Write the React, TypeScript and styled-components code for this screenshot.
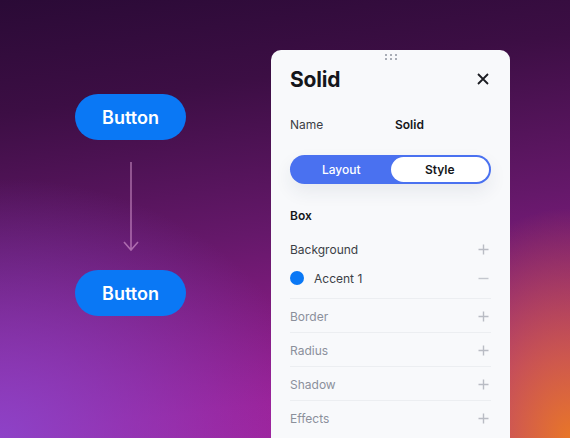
import React from 'react'
import styled, { createGlobalStyle } from 'styled-components'

const GlobalStyle = createGlobalStyle`
  html, body {
    margin: 0;
    padding: 0;
    overflow: hidden;
  }
  body {
    font-family: Inter, "Noto Sans", sans-serif;
  }
`

const sections = ['Border', 'Radius', 'Shadow', 'Effects']

function PlusIcon() {
    return (
        <svg width="11" height="11" viewBox="0 0 11 11">
            <path d="M5.5 0.5v10M0.5 5.5h10" stroke="#b9bcc4" strokeWidth="1.4" />
        </svg>
    )
}

function MinusIcon() {
    return (
        <svg width="11" height="11" viewBox="0 0 11 11">
            <path d="M0.5 5.5h10" stroke="#c4c7ce" strokeWidth="1.4" />
        </svg>
    )
}

export default function App() {
    return (
        <>
            <GlobalStyle />
            <Stage>
                <Demo>
                    <PillButton>Button</PillButton>
                    <Arrow width="20" height="130" viewBox="0 0 20 130">
                        <path d="M10 22v88M3 102l7 8 7-8" stroke="rgba(230,170,220,0.55)" strokeWidth="1.6" fill="none" />
                    </Arrow>
                    <PillButton>Button</PillButton>
                </Demo>
                <Panel>
                    <Handle>
                        {Array.from({ length: 6 }).map((_, i) => <Dot key={i} />)}
                    </Handle>
                    <TitleRow>
                        <Title>Solid</Title>
                        <svg width="12" height="12" viewBox="0 0 12 12">
                            <path d="M1 1l10 10M11 1L1 11" stroke="#1c1d22" strokeWidth="1.8" />
                        </svg>
                    </TitleRow>
                    <NameRow>
                        <Label>Name</Label>
                        <Value>Solid</Value>
                    </NameRow>
                    <Toggle>
                        <Tab>Layout</Tab>
                        <Tab $active>Style</Tab>
                    </Toggle>
                    <Heading>Box</Heading>
                    <Row>
                        <RowLabel>Background</RowLabel>
                        <PlusIcon />
                    </Row>
                    <AccentRow>
                        <Swatch />
                        <AccentName>Accent 1</AccentName>
                        <MinusIcon />
                    </AccentRow>
                    {sections.map(name => (
                        <Section key={name}>
                            <RowLabel $muted>{name}</RowLabel>
                            <PlusIcon />
                        </Section>
                    ))}
                </Panel>
            </Stage>
        </>
    )
}

const Stage = styled.div`
    width: 570px;
    height: 438px;
    display: flex;
    align-items: flex-start;
    padding-left: 75px;
    box-sizing: border-box;
    gap: 85px;
    background:
        radial-gradient(ellipse 170px 230px at 100% 100%, rgba(232, 118, 40, 1), rgba(232, 118, 40, 0)),
        radial-gradient(ellipse 320px 260px at 0% 100%, rgba(140, 70, 205, 0.9), rgba(140, 70, 205, 0)),
        linear-gradient(172deg, #2a0a36 0%, #3c0e44 22%, #65186a 52%, #9c1f94 85%, #a4229c 100%);
`

const Demo = styled.div`
    width: 111px;
    padding-top: 94px;
    display: flex;
    flex-direction: column;
    align-items: center;
`

const PillButton = styled.div`
    width: 111px;
    height: 46px;
    border-radius: 23px;
    background: #0a78f5;
    color: #fff;
    font-size: 18px;
    font-weight: 600;
    display: flex;
    align-items: center;
    justify-content: center;
`

const Arrow = styled.svg`
    display: block;
`

const Panel = styled.div`
    width: 239px;
    height: 400px;
    margin-top: 50px;
    background: #f8f9fb;
    border-radius: 10px 10px 0 0;
    padding: 0 19px;
    box-sizing: border-box;
`

const Handle = styled.div`
    display: grid;
    grid-template-columns: repeat(3, 2px);
    grid-auto-rows: 2px;
    gap: 2px 3px;
    justify-content: center;
    padding-top: 4px;
    height: 15px;
    box-sizing: border-box;
`

const Dot = styled.span`
    width: 2px;
    height: 2px;
    background: #a9adb6;
`

const TitleRow = styled.div`
    display: flex;
    justify-content: space-between;
    align-items: center;
    height: 28px;
    padding-right: 2px;
`

const Title = styled.h1`
    margin: 0;
    font-size: 21px;
    font-weight: 700;
    color: #15161a;
    letter-spacing: -0.2px;
`

const NameRow = styled.div`
    display: flex;
    align-items: center;
    height: 18px;
    margin-top: 22px;
    font-size: 12px;
`

const Label = styled.span`
    width: 105px;
    color: #3c3f46;
`

const Value = styled.span`
    font-weight: 600;
    color: #15161a;
`

const Toggle = styled.div`
    margin-top: 22px;
    height: 29px;
    border-radius: 15px;
    background: #4a71f0;
    padding: 2px;
    box-sizing: border-box;
    display: grid;
    grid-template-columns: 1fr 1fr;
    box-shadow: 0 8px 18px rgba(40, 50, 90, 0.08);
`

const Tab = styled.div<{ $active?: boolean }>`
    border-radius: 13px;
    display: flex;
    align-items: center;
    justify-content: center;
    font-size: 12px;
    font-weight: ${p => (p.$active ? 600 : 500)};
    color: ${p => (p.$active ? '#15161a' : '#fff')};
    background: ${p => (p.$active ? '#fff' : 'transparent')};
`

const Heading = styled.div`
    margin-top: 23px;
    height: 18px;
    line-height: 18px;
    font-size: 12px;
    font-weight: 600;
    color: #15161a;
`

const Row = styled.div`
    display: flex;
    align-items: center;
    justify-content: space-between;
    height: 18px;
    margin-top: 15px;
    padding-right: 2px;
`

const RowLabel = styled.span<{ $muted?: boolean }>`
    font-size: 12px;
    color: ${p => (p.$muted ? '#8b909b' : '#3c3f46')};
`

const AccentRow = styled(Row)`
    margin-top: 11px;
    justify-content: flex-start;
    margin-bottom: 11px;
`

const Swatch = styled.span`
    width: 14px;
    height: 14px;
    border-radius: 50%;
    background: #0a78f5;
`

const AccentName = styled.span`
    flex: 1;
    margin-left: 10px;
    font-size: 12px;
    color: #3c3f46;
`

const Section = styled.div`
    display: flex;
    align-items: center;
    justify-content: space-between;
    height: 34px;
    padding-top: 2px;
    box-sizing: border-box;
    border-top: 1px solid #eceef1;
    padding-right: 2px;
`
